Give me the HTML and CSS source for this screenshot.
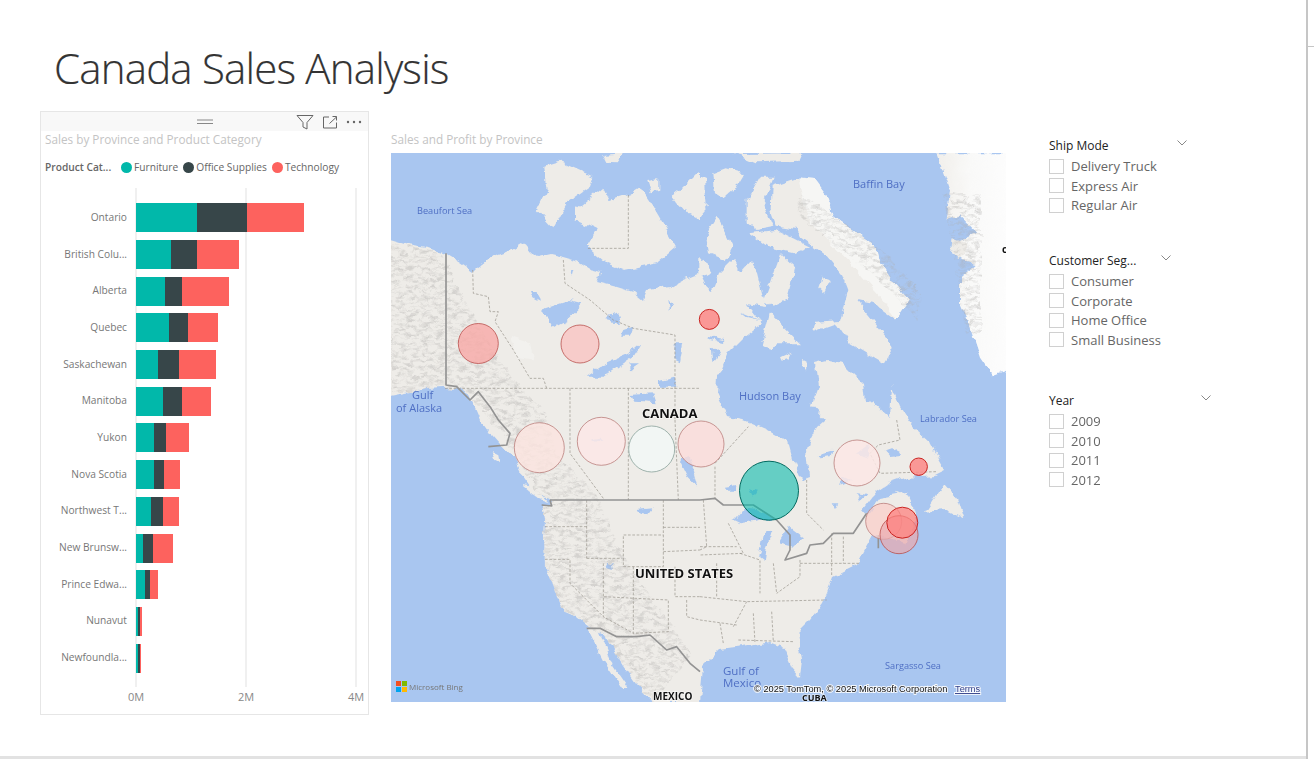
FILE: index.html
```html
<!DOCTYPE html>
<html lang="en">
<head>
<meta charset="utf-8">
<title>Canada Sales Analysis</title>
<link rel="stylesheet" href="styles.css">
</head>
<body>
<div class="page">
  <header class="title-bar"><h1 class="page-title">Canada Sales Analysis</h1></header>
  <main class="report">
    <section class="card">
      <div class="card-head">
        <svg class="grip" width="18" height="6" viewBox="0 0 18 6"><path d="M1 1H17M1 4.500H17"/></svg>
        <div class="tools">
          <svg class="tool" width="18" height="16" viewBox="0 0 18 16"><path d="M1 1.500H17L11 8.500V15L7 13V8.500Z"/></svg>
          <svg class="tool" width="14" height="13" viewBox="0 0 14 13"><path d="M6 1H.5V12H13.500V6.500M6.500 7.500L13.500 1M9.500 .5H13.500V4.500"/></svg>
          <svg class="dots" width="16" height="4" viewBox="0 0 16 4"><circle cx="2" cy="2" r="1.200"/><circle cx="8" cy="2" r="1.200"/><circle cx="14" cy="2" r="1.200"/></svg>
        </div>
      </div>
      <h2 class="visual-title card-title">Sales by Province and Product Category</h2>
      <div class="legend">
        <span class="legend-name">Product Cat...</span>
        <span class="legend-item"><i class="dot teal"></i>Furniture</span>
        <span class="legend-item"><i class="dot slate"></i>Office Supplies</span>
        <span class="legend-item"><i class="dot coral"></i>Technology</span>
      </div>
      <div class="plot">
        <div class="row"><span class="label">Ontario</span><div class="bar"><i class="teal" style="width:61px"></i><i class="slate" style="width:50.6px"></i><i class="coral" style="width:56.7px"></i></div></div>
        <div class="row"><span class="label">British Colu...</span><div class="bar"><i class="teal" style="width:35px"></i><i class="slate" style="width:26px"></i><i class="coral" style="width:42.7px"></i></div></div>
        <div class="row"><span class="label">Alberta</span><div class="bar"><i class="teal" style="width:29px"></i><i class="slate" style="width:17.3px"></i><i class="coral" style="width:47px"></i></div></div>
        <div class="row"><span class="label">Quebec</span><div class="bar"><i class="teal" style="width:33px"></i><i class="slate" style="width:19px"></i><i class="coral" style="width:30.3px"></i></div></div>
        <div class="row"><span class="label">Saskachewan</span><div class="bar"><i class="teal" style="width:22px"></i><i class="slate" style="width:21px"></i><i class="coral" style="width:37px"></i></div></div>
        <div class="row"><span class="label">Manitoba</span><div class="bar"><i class="teal" style="width:27.7px"></i><i class="slate" style="width:18.3px"></i><i class="coral" style="width:29px"></i></div></div>
        <div class="row"><span class="label">Yukon</span><div class="bar"><i class="teal" style="width:18px"></i><i class="slate" style="width:12.3px"></i><i class="coral" style="width:23px"></i></div></div>
        <div class="row"><span class="label">Nova Scotia</span><div class="bar"><i class="teal" style="width:18.3px"></i><i class="slate" style="width:9.7px"></i><i class="coral" style="width:16.3px"></i></div></div>
        <div class="row"><span class="label">Northwest T...</span><div class="bar"><i class="teal" style="width:15px"></i><i class="slate" style="width:12px"></i><i class="coral" style="width:16.3px"></i></div></div>
        <div class="row"><span class="label">New Brunsw...</span><div class="bar"><i class="teal" style="width:7.7px"></i><i class="slate" style="width:9.6px"></i><i class="coral" style="width:20px"></i></div></div>
        <div class="row"><span class="label">Prince Edwa...</span><div class="bar"><i class="teal" style="width:9px"></i><i class="slate" style="width:5px"></i><i class="coral" style="width:8.3px"></i></div></div>
        <div class="row"><span class="label">Nunavut</span><div class="bar"><i class="teal" style="width:2px"></i><i class="slate" style="width:2px"></i><i class="coral" style="width:2px"></i></div></div>
        <div class="row"><span class="label">Newfoundla...</span><div class="bar"><i class="teal" style="width:2.7px"></i><i class="slate" style="width:1.3px"></i><i class="coral" style="width:1.3px"></i></div></div>
      </div>
      <div class="axis"><span>0M</span><span>2M</span><span>4M</span></div>
    </section>

    <section class="map-panel">
      <h2 class="visual-title map-title">Sales and Profit by Province</h2>
      <svg class="map" width="615" height="549" viewBox="0 0 615 549">
        <defs>
          <filter id="coast" x="0" y="0" width="100%" height="100%">
            <feTurbulence type="fractalNoise" baseFrequency="0.09" numOctaves="3" seed="4" result="n"/>
            <feDisplacementMap in="SourceGraphic" in2="n" scale="8" xChannelSelector="R" yChannelSelector="G"/>
            <feGaussianBlur stdDeviation="0.55"/>
          </filter>
          <filter id="softer" x="-5%" y="-5%" width="110%" height="110%"><feGaussianBlur stdDeviation="0.55"/></filter>
          <filter id="relief" x="0" y="0" width="100%" height="100%">
            <feTurbulence type="fractalNoise" baseFrequency="0.13 0.3" numOctaves="3" seed="7"/>
            <feColorMatrix type="matrix" values="0 0 0 0 0.42  0 0 0 0 0.41  0 0 0 0 0.40  3 0 0 0 -1.3"/>
          </filter>
          <linearGradient id="ice" x1="0" y1="0" x2="1" y2="0"><stop offset="0" stop-color="#f1efeb"/><stop offset="0.45" stop-color="#f9f9f8"/><stop offset="1" stop-color="#fdfdfd"/></linearGradient>
          <path id="main" d="M-1 87L16 92 36 95 54 101 69 110 82 119 87 114 99 105 116 99 131 90 139 100 146 105 159 102 172 105 186 109 199 117 211 120 206 129 226 134 242 139 252 147 256 137 279 134 292 127 309 120 316 134 322 137 329 120 342 107 352 117 359 109 366 120 371 140 376 154 355 151 371 170 352 185 337 200 327 224 326 240 337 264 352 267 376 277 397 289 401 304 411 327 419 324 416 297 419 287 426 274 434 267 421 252 427 234 424 210 436 207 452 210 472 230 474 250 482 249 499 265 501 234 509 254 517 267 522 274 539 290 554 317 544 322 516 324 499 330 486 339 472 357 476 362 489 345 516 340 522 354 526 367 516 390 489 384 482 382 472 400 466 412 442 424 436 440 432 449 419 467 406 480 411 507 409 524 401 515 392 494 379 489 352 494 329 497 312 514 309 549 262 549 244 530 232 513 216 487 211 480 199 475 186 464 174 459 166 444 154 414 153 384 154 367 151 352 159 352 161 347 146 342 139 334 132 324 122 304 109 290 89 267 79 244 66 235 52 234 36 235 19 240 -1 244Z"/>
          <clipPath id="main-land"><use href="#main"/></clipPath>
          <clipPath id="relief-west">
            <path d="M-1 90L50 100 75 150 120 225 155 260 165 300 205 340 225 390 260 445 300 500 262 549 190 500 150 420 150 350 125 300 80 245 0 240Z"/>
          </clipPath>
          <clipPath id="relief-baffin">
            <path d="M410 42L440 60 490 95 530 140 528 168 480 120 440 90 405 60ZM552 40L590 40 590 180 575 180Z"/>
          </clipPath>
        </defs>
        <rect class="ocean" width="615" height="549"/>
        <g filter="url(#coast)">
          <use class="land" href="#main"/>
          <g transform="translate(-1 -23) scale(.33333)">
            <path class="land" d="M460 110L510 95 610 140 600 170 530 220 490 295 440 240 470 180Z"/>
            <path class="land" d="M555 240L640 170 660 210 720 190 750 170 790 230 860 350 800 400 700 420 650 400 590 350 620 300 555 270Z"/>
            <path class="land" d="M640 75L700 70 680 97 650 95Z"/>
            <path class="land" d="M772 150L805 145 805 185 785 190Z"/>
            <path class="land" d="M845 195L890 160 930 120 930 270 890 250Z"/>
            <path class="water" d="M450 540L540 510 580 520 530 570 490 590 480 570Z"/>
            <path class="water" d="M420 480L440 480 450 515 430 505Z"/>
            <path class="water" d="M590 740L650 700 720 670 755 640 730 680 640 740Z"/>
            <path class="water" d="M660 560L680 550 690 580 650 570ZM700 600L730 590 720 620 690 620ZM835 510L850 520 840 540ZM855 640L880 640 870 700 850 690ZM810 750L850 740 860 770 810 770ZM715 700L750 700 720 720ZM720 795L790 790 800 820 730 815Z"/>
            <path class="water" d="M540 420L550 420 545 440Z"/>
            <path class="snow soft-snow" d="M360 620L420 640 430 690 385 680Z"/>
          </g>
          <g transform="translate(309 -23) scale(.33333)">
            <path class="land" d="M100 72L310 70 300 92 170 97 130 80Z"/>
            <path class="land" d="M40 130L80 115 130 130 100 180 70 205 45 190Z"/>
            <path class="land" d="M20 310L50 260 85 320 100 350 80 390 30 370Z"/>
            <path class="land" d="M140 210L180 140 222 140 190 220 220 290 170 300 140 280Z"/>
            <path class="land" d="M-5 140L15 150 20 230 -5 260Z"/>
            <path class="land" d="M-5 380L20 395 32 430 -5 440Z"/>
            <path class="land" d="M190 510L240 370 285 410 260 510 215 530Z"/>
            <path class="land" d="M145 310L230 300 330 350 280 370 200 350Z"/>
            <path class="land" d="M215 170L290 145 375 195 400 260 530 350 540 395 575 450 630 510 590 570 520 520 470 510 560 620 575 660 550 700 450 640 410 580 340 605 345 575 420 570 445 480 430 440 380 380 300 320 290 300 230 290 212 240Z"/>
            <path class="snow" d="M295 145L345 150 378 195 400 260 530 350 540 395 575 450 630 510 590 570 540 500 470 420 400 350 320 260Z"/>
            <path class="land" d="M185 645L210 550 270 610 300 640 230 640 220 655Z"/>
            <path class="land" d="M240 685L275 668 265 690 245 695Z"/>
            <path class="land" d="M365 440L395 450 375 490 355 470Z"/>
            <path class="land" d="M310 690L320 695 318 718 305 710Z"/>
            <path class="water" d="M25 620L70 630 75 640 30 630ZM35 650L60 670 40 700ZM120 545L180 570 140 560Z"/>
            <path class="ice" d="M712 70L930 70 930 720 880 738 840 680 810 590 780 520 780 440 830 400 790 390 750 370 760 340 830 310 780 260 740 270 750 180Z"/>
            <path class="land" d="M755 325L795 340 800 375 775 390 750 365Z"/>
          </g>
          <g transform="translate(-1 267) scale(.33333)">
            <path class="land" d="M590 625L625 630 660 720 715 800 700 810 640 720 600 640Z"/>
            <path class="land" d="M395 195L430 200 475 250 450 240Z"/>
            <path class="land" d="M305 90L325 100 330 130 320 120Z"/>
            <path class="land" d="M275 0L320 0 355 40 340 60 300 40Z"/>
            <path class="water" d="M870 120L900 110 925 200 895 170ZM600 55L630 50 640 60 610 62ZM650 425L668 430 672 450 655 445ZM735 270L785 265 770 285 745 280Z"/>
          </g>
          <g transform="translate(309 267) scale(.33333)">
            <path class="land" d="M675 275L730 190 770 235 790 295 740 270Z"/>
            <path class="water" d="M100 300L130 265 170 270 230 300 180 300 120 310Z"/>
            <path class="water" d="M175 410L190 340 220 330 200 380 195 425Z"/>
            <path class="water" d="M240 370L270 320 310 350 280 380Z"/>
            <path class="water" d="M75 200L110 195 105 212 80 212ZM470 100L510 70 505 110ZM350 110L400 95 395 115 360 118ZM560 95L590 85 600 105 570 108ZM395 250L415 250 405 268ZM430 170L450 180 420 195ZM470 220L500 225 480 240ZM150 205L170 210 160 230Z"/>
            <path class="land" d="M585 218L625 233 620 236 590 226Z"/>
          </g>
          <g clip-path="url(#main-land)"><g clip-path="url(#relief-west)"><rect class="relief-rect" width="615" height="549" filter="url(#relief)"/></g></g>
          <g clip-path="url(#relief-baffin)"><rect class="relief-rect" width="615" height="549" filter="url(#relief)"/></g>
        </g>
        <g filter="url(#softer)">
          <g transform="translate(-1 -23) scale(.33333)">
            <path class="dash" d="M248 420L250 490 295 500 300 545 325 545 315 575 370 660 420 745 460 745 470 775M520 390L525 460 600 510 670 570 730 595 855 615 855 870M165 775H930M540 775V870M715 775V870M715 195V355H590"/>
            <path class="line" d="M168 370V765L200 770 240 810 265 785 300 830 325 870 360 910 350 945 295 950"/>
          </g>
          <g transform="translate(-1 267) scale(.33333)">
            <path class="dash" d="M540 0V100L640 235M715 0V240M855 0L865 240M590 240V415M465 320H590M820 240V440H700V345H820M590 415H695M465 418H540V490L640 590M640 430V590L730 640M730 440V640L835 635V540L640 530M820 322H930M820 395L930 390M855 440V530H930M890 540V590L930 600"/>
            <path class="line" d="M480 240H930M480 240L485 258 455 255"/>
            <path class="line" d="M590 625L630 625 680 650 740 650 780 645 830 690 860 680 900 730 930 755"/>
          </g>
          <g transform="translate(309 267) scale(.33333)">
            <path class="dash" d="M10 240L20 380 0 390M0 380H110M85 310L130 400 0 405M120 400L180 420V520M50 430V530M0 530L140 545 380 540M100 620L140 545M60 610L70 670M160 580L165 670M215 575L220 665M115 660L280 665M0 600L110 615M220 430L230 520M300 420V470L230 520M300 430H480M430 350V430M395 340V470M45 140V235M45 130L145 20M320 180V280L370 330M590 0L600 60 535 75 510 100 540 160 710 155"/>
            <path class="line" d="M0 240L45 235 70 255 160 255 230 300 270 345 270 390 255 420 320 400 330 375 370 370 400 340 460 340 500 280M535 345V385"/>
          </g>
        </g>
        <g>
          <text class="sea sm" x="26" y="61">Beaufort Sea</text>
          <text class="sea md" x="462" y="35">Baffin Bay</text>
          <text class="sea md" x="21" y="246">Gulf</text>
          <text class="sea md" x="5" y="259">of Alaska</text>
          <text class="sea md" x="348" y="247">Hudson Bay</text>
          <text class="sea sm" x="529" y="269">Labrador Sea</text>
          <text class="sea sm" x="494" y="516">Sargasso Sea</text>
          <text class="sea lg" x="332" y="522">Gulf of</text>
          <text class="sea lg" x="332" y="534">Mexico</text>
          <text class="place lg" x="251" y="265">CANADA</text>
          <text class="place lg" x="244" y="425">UNITED STATES</text>
          <text class="place sm" x="262" y="547">MEXICO</text>
          <text class="place xs" x="411" y="548">CUBA</text>
          <text class="place sm" x="611" y="100">c</text>
        </g>
        <g>
          <circle class="bubble rim" cx="87.300" cy="190.500" r="20" fill="#f7a9a6" fill-opacity=".8"/>
          <circle class="bubble rim" cx="189" cy="191" r="19" fill="#f9c4c2" fill-opacity=".8"/>
          <circle class="bubble strong" cx="318.300" cy="166.400" r="10" fill="#fb8a87" fill-opacity=".85"/>
          <circle class="bubble faint" cx="148.300" cy="294.700" r="25" fill="#fbe3df" fill-opacity=".8"/>
          <circle class="bubble faint" cx="210.300" cy="288.300" r="24" fill="#fbe8e6" fill-opacity=".85"/>
          <circle class="bubble sage" cx="260.700" cy="296" r="23" fill="#f2f8f6" fill-opacity=".85"/>
          <circle class="bubble faint" cx="310" cy="291" r="23" fill="#fbdcd9" fill-opacity=".8"/>
          <circle class="bubble teal-bubble" cx="378" cy="337.700" r="29.500" fill="#01b8aa" fill-opacity=".58"/>
          <circle class="bubble faint" cx="466" cy="310" r="23" fill="#fbe7e5" fill-opacity=".85"/>
          <circle class="bubble strong" cx="527.700" cy="313.700" r="8.700" fill="#fb8a87" fill-opacity=".85"/>
          <circle class="bubble faint" cx="492.700" cy="368.300" r="18" fill="#f9cfca" fill-opacity=".75"/>
          <circle class="bubble rim" cx="508" cy="381.700" r="19" fill="#e9a9ae" fill-opacity=".7"/>
          <circle class="bubble strong" cx="511.300" cy="369.700" r="15.500" fill="#fd7c79" fill-opacity=".7"/>
        </g>
        <g>
          <rect x="5" y="528" width="5" height="5" fill="#f25022"/>
          <rect x="11" y="528" width="5" height="5" fill="#7fba00"/>
          <rect x="5" y="534" width="5" height="5" fill="#00a4ef"/>
          <rect x="11" y="534" width="5" height="5" fill="#ffb900"/>
          <text class="bing-text" x="18" y="537">Microsoft Bing</text>
        </g>
        <text class="copy" x="363" y="539">© 2025 TomTom, © 2025 Microsoft Corporation</text>
        <text class="terms" x="564" y="539">Terms</text>
      </svg>
    </section>

    <aside class="slicers">
      <div class="slicer slicer-ship">
        <div class="slicer-head"><span>Ship Mode</span><svg class="chev" width="10" height="6" viewBox="0 0 10 6"><path d="M.5 .5L5 5 9.500 .5"/></svg></div>
        <label class="option"><i class="box"></i>Delivery Truck</label>
        <label class="option"><i class="box"></i>Express Air</label>
        <label class="option"><i class="box"></i>Regular Air</label>
      </div>
      <div class="slicer slicer-segment">
        <div class="slicer-head"><span>Customer Seg...</span><svg class="chev" width="10" height="6" viewBox="0 0 10 6"><path d="M.5 .5L5 5 9.500 .5"/></svg></div>
        <label class="option"><i class="box"></i>Consumer</label>
        <label class="option"><i class="box"></i>Corporate</label>
        <label class="option"><i class="box"></i>Home Office</label>
        <label class="option"><i class="box"></i>Small Business</label>
      </div>
      <div class="slicer slicer-year">
        <div class="slicer-head"><span>Year</span><svg class="chev" width="10" height="6" viewBox="0 0 10 6"><path d="M.5 .5L5 5 9.500 .5"/></svg></div>
        <label class="option"><i class="box"></i>2009</label>
        <label class="option"><i class="box"></i>2010</label>
        <label class="option"><i class="box"></i>2011</label>
        <label class="option"><i class="box"></i>2012</label>
      </div>
    </aside>
  </main>
  <div class="page-bottom"></div>
  <div class="edge-tick"></div>
</div>
</body>
</html>
```

FILE: styles.css
```css
* { box-sizing: border-box; }
html, body { margin: 0; padding: 0; background: #fff; overflow: hidden; }
body { font-family: "Open Sans", "Noto Sans", sans-serif; }

.page {
  position: relative;
  width: 1308px;
  height: 759px;
  border-right: 2px solid #c6c6c6;
  display: flex;
  flex-direction: column;
}
.edge-tick {
  position: absolute;
  left: 1306px;
  top: 46px;
  width: 8px;
  height: 1px;
  background: #c6c6c6;
}
.title-bar { height: 111px; padding: 38px 0 0 54px; flex: none; }
.page-title { margin: 0; font-size: 42px; line-height: 60px; font-weight: 300; color: #333; letter-spacing: -0.8px; -webkit-text-stroke: 0.2px #333; }

.report { flex: 1; display: flex; padding-left: 40px; min-height: 0; }
.page-bottom { height: 3px; background: #e2e2e2; flex: none; }

.card {
  width: 329px;
  height: 604px;
  border: 1px solid #e6e6e6;
  display: flex;
  flex-direction: column;
  flex: none;
}
.card-head {
  height: 19px;
  background: #f8f8f8;
  display: flex;
  align-items: center;
  justify-content: center;
  position: relative;
  flex: none;
}
.grip { fill: none; stroke: #888; stroke-width: 1; margin-top: 1px; }
.tools {
  position: absolute;
  right: 6px;
  top: 2px;
  display: flex;
  align-items: center;
  gap: 9px;
}
.tool { fill: none; stroke: #666; stroke-width: 1; }
.dots { fill: #666; }

.visual-title { margin: 0; font-weight: 400; font-size: 11.750px; color: #c4c4c4; line-height: 16px; white-space: nowrap; }
.card-title { padding: 0 0 0 4px; height: 19px; }

.legend { display: flex; align-items: center; height: 16px; margin-top: 9px; padding-left: 4px; font-size: 10.200px; color: #666; white-space: nowrap; }
.legend-name { font-weight: 600; width: 76px; }
.legend-item { display: flex; align-items: center; gap: 2px; margin-right: 5px; }
.dot { width: 11px; height: 11px; border-radius: 50%; display: block; }

.teal { background: #01b8aa; }
.slate { background: #374649; }
.coral { background: #fd625e; }

.plot {
  margin-top: 13px;
  padding-top: 11.500px;
  height: 499px;
  flex: none;
  display: grid;
  grid-auto-rows: 36.700px;
  align-content: start;
  background-image: linear-gradient(#f0f0f0, #f0f0f0), linear-gradient(#f0f0f0, #f0f0f0), linear-gradient(#f0f0f0, #f0f0f0);
  background-size: 2px 100%;
  background-position: 94px 0, 204px 0, 314px 0;
  background-repeat: no-repeat;
}
.row { display: flex; align-items: center; }
.label { width: 86px; text-align: right; font-size: 10.200px; color: #777; white-space: nowrap; flex: none; margin-bottom: 2px; }
.bar { display: flex; height: 29px; margin-left: 8.700px; }
.bar i { display: block; height: 100%; }

.axis { display: flex; justify-content: space-between; width: 248px; margin: 2px 0 0 81px; font-size: 11px; color: #888; }
.axis span { width: 28px; text-align: center; }

.map-panel { margin-left: 22px; width: 615px; flex: none; }
.map-title { margin-top: 20px; height: 22px; }
.map { display: block; }
.ocean { fill: #a9c6f0; }
.land { fill: #eeece8; }
.snow { fill: #f6f6f4; }
.soft-snow { fill: #f2f1ee; }
.water { fill: #a9c6f0; }
.ice { fill: url(#ice); }
.relief-rect { opacity: .4; }
.dash { fill: none; stroke: #9c9890; stroke-width: 2.200; stroke-dasharray: 8 5; }
.line { fill: none; stroke: #939393; stroke-width: 5; stroke-linejoin: round; }

.sea { fill: #4f6fc4; font-family: "Open Sans", sans-serif; }
.sea.sm { font-size: 9.200px; }
.sea.md { font-size: 11px; }
.sea.lg { font-size: 11.500px; }
.place { fill: #111; font-family: "Open Sans", sans-serif; font-weight: 700; paint-order: stroke; stroke: rgba(255,255,255,.6); stroke-width: 1.500px; }
.place.lg { font-size: 13px; }
.place.sm { font-size: 10px; }
.place.xs { font-size: 9px; }

.bubble { stroke-width: 1; }
.rim { stroke: #b9504d; stroke-opacity: .8; }
.faint { stroke: #ba7f7d; stroke-opacity: .8; }
.strong { stroke: #c82320; }
.sage { stroke: #9eb1ab; }
.teal-bubble { stroke: #01695f; }

.bing-text { fill: #777; font-size: 8px; font-family: "Open Sans", sans-serif; }
.copy, .terms { font-size: 9.250px; font-family: "Liberation Sans", sans-serif; paint-order: stroke; stroke: #fff; stroke-width: 2px; stroke-opacity: .85; }
.copy { fill: #111; }
.terms { fill: #33408a; text-decoration: underline; }

.slicers { margin-left: 43px; padding-top: 26px; width: 180px; flex: none; }
.slicer-segment { margin-top: 36.600px; }
.slicer-year { margin-top: 42px; }
.slicer-head {
  display: flex;
  justify-content: space-between;
  height: 17px;
  margin-bottom: 2.500px;
  font-size: 12px;
  line-height: 17px;
  color: #222;
}
.slicer-ship .slicer-head { width: 138px; }
.slicer-segment .slicer-head { width: 122px; }
.slicer-year .slicer-head { width: 162px; }
.chev { fill: none; stroke: #888; stroke-width: 1; margin-top: 3px; }
.option { display: flex; align-items: center; height: 19.600px; font-size: 13px; color: #666; white-space: nowrap; }
.box { width: 15px; height: 15px; border: 1px solid #d0d0d0; background: #fff; margin-right: 7px; display: block; flex: none; }
```
